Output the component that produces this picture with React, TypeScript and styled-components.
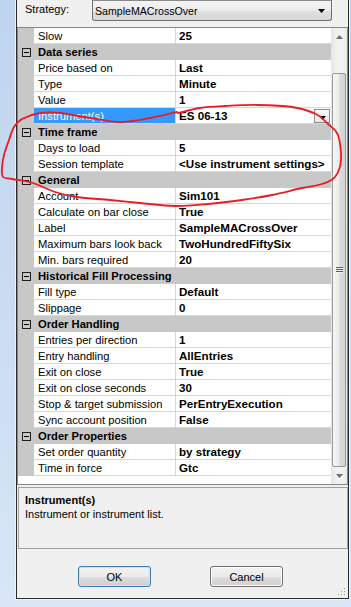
import React from "react";
import styled, { createGlobalStyle, css } from "styled-components";

const GlobalStyle = createGlobalStyle`
  html, body { margin: 0; padding: 0; }
  body {
    width: 351px;
    height: 607px;
    overflow: hidden;
    background: linear-gradient(180deg, #bfd4ee 0%, #cfe0f4 70%, #d9e7f7 100%);
    font-family: "Liberation Sans", Arial, sans-serif;
    color: #000;
  }
`;

type Row =
  | { cat: string }
  | { name: string; value: string; selected?: boolean; dropdown?: boolean };

const rows: Row[] = [
  { name: "Slow", value: "25" },
  { cat: "Data series" },
  { name: "Price based on", value: "Last" },
  { name: "Type", value: "Minute" },
  { name: "Value", value: "1" },
  { name: "Instrument(s)", value: "ES 06-13", selected: true, dropdown: true },
  { cat: "Time frame" },
  { name: "Days to load", value: "5" },
  { name: "Session template", value: "<Use instrument settings>" },
  { cat: "General" },
  { name: "Account", value: "Sim101" },
  { name: "Calculate on bar close", value: "True" },
  { name: "Label", value: "SampleMACrossOver" },
  { name: "Maximum bars look back", value: "TwoHundredFiftySix" },
  { name: "Min. bars required", value: "20" },
  { cat: "Historical Fill Processing" },
  { name: "Fill type", value: "Default" },
  { name: "Slippage", value: "0" },
  { cat: "Order Handling" },
  { name: "Entries per direction", value: "1" },
  { name: "Entry handling", value: "AllEntries" },
  { name: "Exit on close", value: "True" },
  { name: "Exit on close seconds", value: "30" },
  { name: "Stop & target submission", value: "PerEntryExecution" },
  { name: "Sync account position", value: "False" },
  { cat: "Order Properties" },
  { name: "Set order quantity", value: "by strategy" },
  { name: "Time in force", value: "Gtc" },
];

// red pen annotation, traced off the screenshot
const penPoints: [number, number][] = [
  [177, 112], [150, 118], [120, 122], [90, 118], [60, 113], [40, 113],
  [22, 119], [14, 127], [9, 140], [4, 155], [2, 168], [3, 177], [12, 179],
  [33, 183], [55, 192], [77, 197], [110, 200], [140, 203], [175, 206],
  [208, 204], [242, 200], [272, 195], [302, 188], [322, 184], [335, 177],
  [341, 160], [338, 135], [328, 124], [316, 114], [292, 107], [258, 105],
  [225, 106], [200, 108], [178, 113],
];

const smoothPath = (pts: [number, number][]) => {
  let d = `M ${pts[0][0]} ${pts[0][1]}`;
  for (let i = 0; i < pts.length - 1; i++) {
    const p0 = pts[i - 1] || pts[i];
    const p1 = pts[i];
    const p2 = pts[i + 1];
    const p3 = pts[i + 2] || p2;
    const c1x = p1[0] + (p2[0] - p0[0]) / 6;
    const c1y = p1[1] + (p2[1] - p0[1]) / 6;
    const c2x = p2[0] - (p3[0] - p1[0]) / 6;
    const c2y = p2[1] - (p3[1] - p1[1]) / 6;
    d += ` C ${c1x.toFixed(1)} ${c1y.toFixed(1)} ${c2x.toFixed(1)} ${c2y.toFixed(1)} ${p2[0]} ${p2[1]}`;
  }
  return d;
};

const Frame = styled.div`
  height: 607px;
  padding-left: 16px;
  box-sizing: border-box;
`;

const Window = styled.div`
  position: relative;
  width: 333px;
  height: 599px;
  box-sizing: border-box;
  border: 1px solid #2b2b2b;
  border-top: none;
  background: #f0f0f0;
  display: flex;
  flex-direction: column;
  box-shadow: -1px 0 0 #eef4fb, 1px 0 0 #eef4fb, 0 1px 0 #eef4fb;
`;

const TopBar = styled.div`
  height: 27px;
  display: flex;
  align-items: flex-start;
`;

const Label = styled.div`
  width: 67px;
  margin: 3px 0 0 8px;
  font-size: 11px;
  line-height: 13px;
`;

const Combo = styled.div`
  width: 240px;
  height: 21px;
  box-sizing: border-box;
  border: 1px solid #707070;
  border-top-color: #8a8a8a;
  border-radius: 0 0 3px 3px;
  background: linear-gradient(180deg, #f4f4f4 0%, #ececec 50%, #e0e0e0 51%, #d7d7d7 100%);
  display: flex;
  align-items: center;
  padding: 0 6px 0 2px;
  font-size: 10.6px;
`;

const ComboText = styled.span`
  flex: 1;
`;

const Grid = styled.div`
  height: 458px;
  box-sizing: border-box;
  border: 1px solid #828790;
  display: flex;
`;

const Rows = styled.div`
  width: 313px;
  background: #fff;
  display: flex;
  flex-direction: column;
`;

const RowLine = styled.div`
  height: 16px;
  display: flex;
`;

const Gutter = styled.div`
  width: 16px;
  background: #c8c8c8;
  display: flex;
  align-items: center;
  justify-content: center;
`;

const Toggle = styled.div`
  width: 9px;
  height: 9px;
  box-sizing: border-box;
  border: 1px solid #1e1e1e;
  display: flex;
  align-items: center;
  justify-content: center;
  &::after {
    content: "";
    width: 5px;
    height: 1px;
    background: #000;
  }
`;

const cellBase = css`
  box-sizing: border-box;
  height: 16px;
  line-height: 16px;
  border-bottom: 1px solid #d6d6d6;
  white-space: nowrap;
  overflow: hidden;
`;

const NameCell = styled.div<{ $selected?: boolean }>`
  ${cellBase};
  width: 142px;
  padding-left: 4px;
  font-size: 11.2px;
  border-right: 1px solid #d6d6d6;
  background: ${(p) => (p.$selected ? "#3399ff" : "#fff")};
  color: ${(p) => (p.$selected ? "#fff" : "#000")};
`;

const ValueCell = styled.div`
  ${cellBase};
  flex: 1;
  display: flex;
  align-items: center;
  padding-left: 3px;
  font-size: 11.6px;
  font-weight: bold;
`;

const ValueText = styled.span`
  flex: 1;
`;

const CatCell = styled.div`
  ${cellBase};
  flex: 1;
  padding-left: 4px;
  background: #c8c8c8;
  border-bottom-color: #c8c8c8;
  font-size: 11.2px;
  font-weight: bold;
`;

const DropButton = styled.div`
  width: 16px;
  height: 14px;
  box-sizing: border-box;
  margin-right: 1px;
  border: 1px solid #8c8c8c;
  background: linear-gradient(180deg, #fafafa 0%, #e6e6e6 100%);
  display: flex;
  align-items: flex-end;
  justify-content: center;
  padding-bottom: 2px;
`;

const ScrollBar = styled.div`
  width: 16px;
  display: flex;
  flex-direction: column;
  background: linear-gradient(90deg, #e6e6e6 0%, #f2f2f2 40%, #f2f2f2 70%, #e9e9e9 100%);
`;

const ArrowBox = styled.div`
  height: 17px;
  display: flex;
  align-items: center;
  justify-content: center;
`;

const Track = styled.div`
  flex: 1;
  padding-top: 28px;
  display: flex;
  flex-direction: column;
`;

const Thumb = styled.div`
  height: 394px;
  margin: 0 1px;
  box-sizing: border-box;
  border: 1px solid #9a9a9a;
  border-radius: 2px;
  background: linear-gradient(90deg, #f6f6f6 0%, #ececec 50%, #dcdcdc 55%, #d2d2d2 100%);
  display: flex;
  align-items: center;
  justify-content: center;
`;

const Grip = styled.div`
  width: 7px;
  height: 6px;
  background: repeating-linear-gradient(180deg, #5a5a5a 0 1px, #f4f4f4 1px 2px);
`;

const Panel = styled.div`
  margin: 2px 0 0 1px;
  width: 330px;
  height: 62px;
  box-sizing: border-box;
  border: 1px solid #a0a0a0;
  padding: 5px 0 0 6px;
  font-size: 11px;
  line-height: 14px;
`;

const PanelTitle = styled.div`
  font-weight: bold;
`;

const ButtonRow = styled.div`
  margin-top: 17px;
  padding-left: 61px;
  display: flex;
  gap: 59px;
`;

const Button = styled.div<{ $default?: boolean }>`
  width: 73px;
  height: 21px;
  box-sizing: border-box;
  border: 1px solid ${(p) => (p.$default ? "#3c7fb1" : "#707070")};
  border-radius: 3px;
  background: linear-gradient(180deg, #f2f2f2 0%, #ebebeb 50%, #dddddd 51%, #cfcfcf 100%);
  box-shadow: ${(p) => (p.$default ? "inset 0 0 0 1px #c4e5f6" : "inset 0 0 0 1px #fcfcfc")};
  display: flex;
  align-items: center;
  justify-content: center;
  font-size: 11px;
`;

const SizeGrip = styled.svg`
  position: absolute;
  right: 2px;
  bottom: 2px;
`;

const Pen = styled.svg`
  position: absolute;
  left: 0;
  top: 0;
  pointer-events: none;
`;

const Tri = ({ up, color = "#000" }: { up?: boolean; color?: string }) => (
  <svg width="7" height="4" viewBox="0 0 7 4">
    <path d={up ? "M0 4 L3.5 0 L7 4 Z" : "M0 0 L7 0 L3.5 4 Z"} fill={color} />
  </svg>
);

const PropertyRow = ({ row }: { row: Row }) => {
  if ("cat" in row) {
    return (
      <RowLine>
        <Gutter>
          <Toggle />
        </Gutter>
        <CatCell>{row.cat}</CatCell>
      </RowLine>
    );
  }
  return (
    <RowLine>
      <Gutter />
      <NameCell $selected={row.selected}>{row.name}</NameCell>
      <ValueCell>
        <ValueText>{row.value}</ValueText>
        {row.dropdown && (
          <DropButton>
            <Tri />
          </DropButton>
        )}
      </ValueCell>
    </RowLine>
  );
};

export default function App() {
  return (
    <>
      <GlobalStyle />
      <Frame>
        <Window>
          <TopBar>
            <Label>Strategy:</Label>
            <Combo>
              <ComboText>SampleMACrossOver</ComboText>
              <Tri />
            </Combo>
          </TopBar>
          <Grid>
            <Rows>
              {rows.map((r, i) => (
                <PropertyRow key={i} row={r} />
              ))}
            </Rows>
            <ScrollBar>
              <ArrowBox>
                <Tri up color="#6d6d6d" />
              </ArrowBox>
              <Track>
                <Thumb>
                  <Grip />
                </Thumb>
              </Track>
              <ArrowBox>
                <Tri color="#6d6d6d" />
              </ArrowBox>
            </ScrollBar>
          </Grid>
          <Panel>
            <PanelTitle>Instrument(s)</PanelTitle>
            <div>Instrument or instrument list.</div>
          </Panel>
          <ButtonRow>
            <Button $default>OK</Button>
            <Button>Cancel</Button>
          </ButtonRow>
          <SizeGrip width="10" height="10" viewBox="0 0 10 10">
            {[
              [8, 2], [8, 5], [5, 5], [8, 8], [5, 8], [2, 8],
            ].map(([x, y], i) => (
              <rect key={i} x={x} y={y} width="1" height="1" fill="#9a9a9a" />
            ))}
          </SizeGrip>
        </Window>
      </Frame>
      <Pen width="351" height="607" viewBox="0 0 351 607">
        <path
          d={smoothPath(penPoints)}
          fill="none"
          stroke="#ec1c24"
          strokeWidth="1.8"
          strokeLinecap="round"
          strokeLinejoin="round"
        />
      </Pen>
    </>
  );
}
